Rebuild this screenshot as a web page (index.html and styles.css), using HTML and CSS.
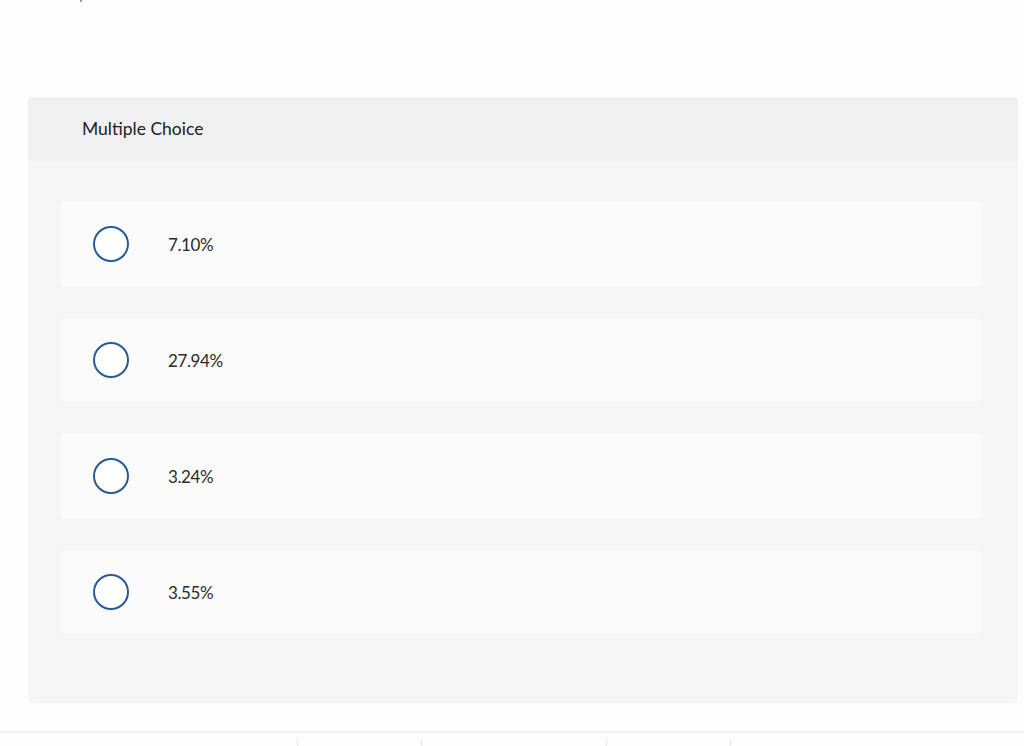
FILE: index.html
```html
<!DOCTYPE html>
<html lang="en">
<head>
<meta charset="utf-8">
<title>Multiple Choice</title>
<link rel="stylesheet" href="styles.css">
</head>
<body>
<div class="top-mark"></div>
<section class="question">
  <header class="question-head">Multiple Choice</header>
  <div class="question-body">
    <label class="option"><span class="radio"></span><span class="option-text">7.10%</span></label>
    <label class="option"><span class="radio"></span><span class="option-text">27.94%</span></label>
    <label class="option"><span class="radio"></span><span class="option-text">3.24%</span></label>
    <label class="option"><span class="radio"></span><span class="option-text">3.55%</span></label>
  </div>
</section>
<footer class="footer">
  <span class="tick t1"></span>
  <span class="tick t2"></span>
  <span class="tick t3"></span>
  <span class="tick t4"></span>
</footer>
</body>
</html>
```
FILE: styles.css
```css
html, body {
  margin: 0;
  padding: 0;
  background: #fdfdfd;
  font-family: Lato, "Open Sans", "Liberation Sans", sans-serif;
  color: #2b2b2b;
}
body {
  width: 1024px;
  height: 746px;
  overflow: hidden;
  position: relative;
}
.top-mark {
  position: absolute;
  left: 80px;
  top: 0;
  width: 2px;
  height: 2px;
  background: #999;
}
.question {
  margin: 97px 6px 0 28px;
  border-radius: 5px;
  overflow: hidden;
  background: #f5f5f5;
}
.question-head {
  height: 64px;
  background: #f0f0f0;
  box-sizing: border-box;
  padding: 21px 0 0 54px;
  font-size: 17.5px;
  line-height: 22px;
  color: #222;
}
.question-body {
  padding: 41px 36px 69px 33px;
  display: flex;
  flex-direction: column;
  gap: 32px;
}
.option {
  height: 84px;
  background: #fafafa;
  border-radius: 4px;
  display: flex;
  align-items: center;
  padding-left: 32px;
}
.radio {
  width: 32px;
  height: 32px;
  border: 2px solid #265b96;
  border-radius: 50%;
  background: #fff;
  flex: none;
}
.option-text {
  margin-left: 39px;
  font-size: 17px;
  color: #2b2b2b;
  letter-spacing: -0.4px;
}
.footer {
  position: absolute;
  left: 0;
  right: 0;
  top: 731px;
  height: 15px;
  border-top: 2px solid #f0f0f0;
}
.tick {
  position: absolute;
  top: 6px;
  width: 1px;
  height: 9px;
  background: #e6e6e6;
}
.t1 { left: 297px; }
.t2 { left: 421px; }
.t3 { left: 606px; }
.t4 { left: 730px; }
```
